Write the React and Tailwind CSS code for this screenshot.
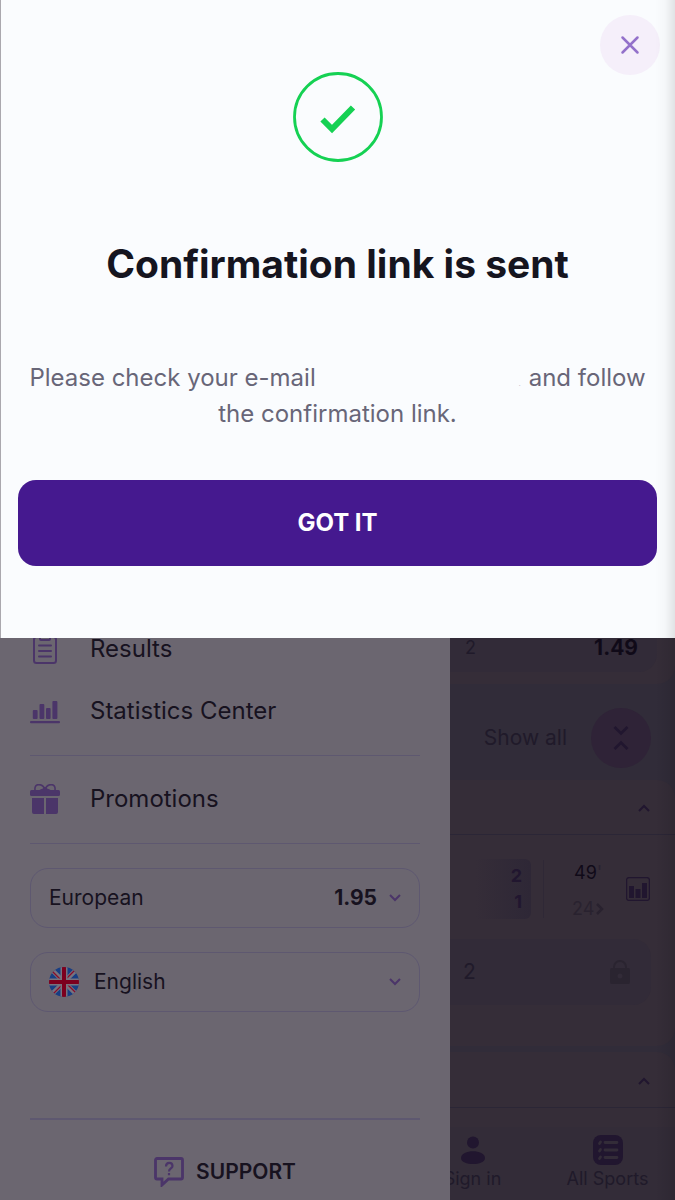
import React, { useState } from 'react';

const ChevronIcon = ({ className, up = false }) => (
  <svg className={className} width="12" height="8" viewBox="0 0 12 8" fill="none" stroke="currentColor" strokeWidth="2" aria-hidden="true">
    <path d={up ? 'M1 7 6 2 11 7' : 'M1 1 6 6 11 1'} />
  </svg>
);

const ResultsIcon = () => (
  <svg width="30" height="30" viewBox="0 0 30 30" fill="none" stroke="currentColor" strokeWidth="2" strokeLinecap="round" aria-hidden="true">
    <rect x="4" y="3" width="22" height="26" rx="2.500" />
    <path d="M10 2v3a1 1 0 0 0 1 1h8a1 1 0 0 0 1-1V2M9 11.500h12M9 17h12M9 22.500h12" />
  </svg>
);

const StatisticsIcon = () => (
  <svg width="30" height="30" viewBox="0 0 30 30" fill="currentColor" aria-hidden="true">
    <rect x="2.800" y="14" width="4.800" height="9" rx="1" />
    <rect x="9.500" y="8" width="4.800" height="15" rx="1" />
    <rect x="16" y="12" width="4.600" height="11" rx="1" />
    <rect x="22.400" y="5" width="5" height="18" rx="1" />
    <rect x="0" y="25" width="30" height="2.200" rx="1" />
  </svg>
);

const GiftIcon = () => (
  <svg width="30" height="30" viewBox="0 0 30 30" fill="currentColor" aria-hidden="true">
    <path d="M15 5C12-1 4-1 5 6M15 5c3-6 11-6 10 1M15 4.500l-5 2M15 4.500l5 2" fill="none" stroke="currentColor" strokeWidth="1.600" />
    <circle cx="15" cy="5" r="2" />
    <rect y="6" width="30" height="6" rx="1.500" />
    <path d="M2 14h12v16H4a2 2 0 0 1-2-2zM16 14h12v14a2 2 0 0 1-2 2H16z" />
  </svg>
);

const SupportIcon = () => (
  <svg width="30" height="30" viewBox="0 0 30 30" fill="none" stroke="currentColor" aria-hidden="true">
    <path d="M3 1.500h24a1.500 1.500 0 0 1 1.500 1.500v17.500a1.500 1.500 0 0 1-1.500 1.500H14.500L8 28v-6H3a1.500 1.500 0 0 1-1.500-1.500V3A1.500 1.500 0 0 1 3 1.500z" strokeWidth="2.800" />
    <path d="M12 9.500c0-5 6.500-4.500 6.500-.5 0 2.500-3.500 2.500-3.500 5.500M15 16v2.200" strokeWidth="2.200" />
  </svg>
);

const FlagIcon = () => (
  <svg className="rounded-full" width="30" height="30" viewBox="0 0 30 30" aria-hidden="true">
    <rect width="30" height="30" fill="#183e83" />
    <path d="M0 0 30 30M30 0 0 30" stroke="#77737f" strokeWidth="4.500" />
    <path d="M0 1 15 16M30 29 15 14M29 0 14 15M1 30l15-15" stroke="#8a0b28" strokeWidth="1.300" />
    <path d="M15 0v30M0 15h30" stroke="#77737f" strokeWidth="7" />
    <path d="M15 0v30M0 15h30" stroke="#7c001e" strokeWidth="4" />
  </svg>
);

const ChartBoxIcon = () => (
  <svg width="24" height="24" viewBox="0 0 24 24" fill="currentColor" aria-hidden="true">
    <rect x=".6" y=".6" width="22.800" height="22.800" rx="2.500" fill="none" stroke="currentColor" strokeWidth="1.300" />
    <path d="M3 9h5v12H3zM9.500 12h5v9h-5zM16 6h5v15h-5z" />
  </svg>
);

const LockIcon = () => (
  <svg width="20" height="24" viewBox="0 0 20 24" aria-hidden="true">
    <path d="M4 9V7a6 6 0 0 1 12 0v2" fill="none" stroke="currentColor" strokeWidth="2" />
    <path fillRule="evenodd" fill="currentColor" d="M2 8h16a2 2 0 0 1 2 2v12a2 2 0 0 1-2 2H2a2 2 0 0 1-2-2V10a2 2 0 0 1 2-2zm8 5.500a2.500 2.500 0 1 0 0 5 2.500 2.500 0 0 0 0-5z" />
  </svg>
);

const UserIcon = () => (
  <svg width="30" height="30" viewBox="0 0 30 30" fill="currentColor" aria-hidden="true">
    <circle cx="15" cy="7.500" r="6" />
    <path d="M3 23c0-9 24-9 24 0 0 8-24 8-24 0z" />
  </svg>
);

const ListIcon = () => (
  <svg width="30" height="30" viewBox="0 0 30 30" aria-hidden="true">
    <rect width="30" height="30" rx="8" fill="currentColor" />
    <path d="M12 7.500h12M12 15h12M12 22.500h12M6.500 8.500l1-1.500M6.500 16l1-1.500M6.500 23.500l1-1.500" stroke="#332c38" strokeWidth="2.800" strokeLinecap="round" />
  </svg>
);

const ConfirmationDialog = () => (
  <section role="dialog" aria-labelledby="dialog-title" className="relative shrink-0 border-l border-[#aaa8ae] bg-[#fafcfe] pt-[72px] pr-[18px] pb-[72px] pl-[17px] text-center">
    <button type="button" aria-label="Close" className="absolute top-[15px] right-[15px] flex h-[60px] w-[60px] items-center justify-center rounded-full bg-[#f5effa] text-[#9371ca]">
      <svg width="20" height="20" viewBox="0 0 20 20" stroke="currentColor" strokeWidth="2.500" strokeLinecap="round" aria-hidden="true">
        <path d="M2.500 2.500l15 15M17.500 2.500l-15 15" />
      </svg>
    </button>
    <svg className="mx-auto" width="90" height="90" viewBox="0 0 90 90" fill="none" stroke="#15d153" aria-hidden="true">
      <circle cx="45" cy="45" r="43.500" strokeWidth="2.800" />
      <path d="M29.500 47.500 39 57 60 35.500" strokeWidth="6" />
    </svg>
    <h1 id="dialog-title" className="mt-[78px] text-[39px] leading-[48px] font-bold text-[#15151f]">
      Confirmation link is sent
    </h1>
    <p className="mt-[72px] text-2xl leading-9 text-[#686678]">
      Please check your e-mail
      <span className="inline-block w-[213px] pr-2 text-right text-[8px] leading-none text-[#c4c2cc]">.</span>
      and follow
      <br />
      the confirmation link.
    </p>
    <button type="button" className="mt-12 block h-[86px] w-full rounded-[18px] bg-[#45198f] text-2xl font-bold text-white">
      GOT IT
    </button>
    <div className="pointer-events-none absolute inset-y-0 right-0 w-5 bg-linear-to-r from-transparent via-black/2 to-black/10" />
  </section>
);

const menuItemClass = 'flex h-[62px] items-center gap-[30px] text-2xl text-[#17121f]';

const Drawer = () => {
  const [odds, setOdds] = useState('European');
  const [language, setLanguage] = useState('English');

  return (
    <aside className="flex w-2/3 shrink-0 flex-col overflow-hidden bg-[#6b6670] px-[30px] text-[#4b3569]">
      <nav>
        {/* first item is partly tucked under the dialog */}
        <a href="#results" className={`${menuItemClass} -mt-5`}>
          <span className="text-[#4b3569]"><ResultsIcon /></span>
          Results
        </a>
        <a href="#statistics" className={menuItemClass}>
          <span className="text-[#4b3569]"><StatisticsIcon /></span>
          Statistics Center
        </a>
        <div className="mt-[13px] border-y border-[#5e5870] pt-3 pb-[13px]">
          <a href="#promotions" className={menuItemClass}>
            <span className="text-[#4b3569]"><GiftIcon /></span>
            Promotions
          </a>
        </div>
      </nav>

      <div className="mt-6 flex h-[60px] items-center rounded-[18px] border border-[#5e5870] px-[18px]">
        <select
          aria-label="Odds format"
          value={odds}
          onChange={(e) => setOdds(e.target.value)}
          className="min-w-0 flex-1 appearance-none text-[21px] text-[#17121f]"
        >
          <option>European</option>
          <option>American</option>
        </select>
        <span className="text-[21px] font-bold text-[#17121f]">1.95</span>
        <ChevronIcon className="ml-3" />
      </div>

      <div className="mt-6 flex h-[60px] items-center gap-[15px] rounded-[18px] border border-[#5e5870] px-[18px]">
        <FlagIcon />
        <select
          aria-label="Language"
          value={language}
          onChange={(e) => setLanguage(e.target.value)}
          className="min-w-0 flex-1 appearance-none text-[21px] text-[#17121f]"
        >
          <option>English</option>
          <option>Deutsch</option>
        </select>
        <ChevronIcon />
      </div>

      <div className="mt-auto flex h-[82px] items-start justify-center border-t-2 border-[#5e5870] pt-[37px]">
        <a href="#support" className="flex items-center gap-3 text-[21px] font-semibold">
          <SupportIcon />
          <span className="leading-[30px] text-[#17121f]">SUPPORT</span>
        </a>
      </div>
    </aside>
  );
};

const Sportsbook = () => (
  <main className="relative flex min-w-0 flex-1 flex-col overflow-hidden bg-[#312c39] text-[#201a2a]">
    <div className="h-[46px] rounded-br-[18px] bg-[#352d38] pr-[18px]">
      <button type="button" className="flex h-[34px] w-full items-start justify-between rounded-br-[18px] bg-[#322b38] pr-[19px] pl-[15px] text-lg leading-5">
        <span>2</span>
        <span className="text-[21px] font-bold text-[#100a18]">1.49</span>
      </button>
    </div>

    <div className="flex h-24 items-center justify-end gap-6 pt-3 pr-6">
      <label htmlFor="show-all" className="text-[21px]">Show all</label>
      <button id="show-all" type="button" className="flex h-[60px] w-[60px] items-center justify-center rounded-full bg-[#2f2337] text-[#21162f]">
        <svg width="16" height="26" viewBox="0 0 16 26" fill="none" stroke="currentColor" strokeWidth="2.600" aria-hidden="true">
          <path d="M1.500 2 8 8.500 14.500 2M1.500 24 8 17.500l6.500 6.500" />
        </svg>
      </button>
    </div>

    <section className="h-[266px] rounded-br-[18px] rounded-tr-[18px] bg-[#352d38]">
      <button type="button" aria-label="Collapse" className="flex h-[55px] w-full items-center justify-end border-b border-[#2b2636] pt-px pr-[25px] text-[#21162f]">
        <ChevronIcon up />
      </button>
      <div className="flex items-center pt-6 pr-[25px] pl-[25px]">
        <div className="flex h-[60px] w-14 flex-col items-end justify-center rounded-r-md bg-linear-to-r from-[#352d38] to-[#2e2736] pr-[9px] text-lg leading-[26px] font-bold text-[#21162f]">
          <span>2</span>
          <span>1</span>
        </div>
        <div className="ml-3 h-[58px] w-px bg-[#2f2836]" />
        <div className="ml-7 flex h-[60px] flex-col text-lg">
          <span className="pl-[2px] leading-7 text-[#100a18]">49<span className="text-[#292230]">'</span></span>
          <a href="#match" className="mt-2 flex items-center leading-7 text-[#29222f]">
            24
            <svg className="ml-px" width="10" height="14" viewBox="0 0 10 14" fill="none" stroke="currentColor" strokeWidth="2.500" aria-hidden="true">
              <path d="M2 2l5 5-5 5" />
            </svg>
          </a>
        </div>
        <div className="ml-auto text-[#21162f]"><ChartBoxIcon /></div>
      </div>
      <div className="pt-5 pr-6">
        <button type="button" className="flex h-[66px] w-full items-center justify-between rounded-r-[18px] bg-[#322b38] pr-[21px] pl-[13px] text-[21px]">
          <span>2</span>
          <span className="text-[#2a2430]"><LockIcon /></span>
        </button>
      </div>
    </section>

    <section className="mt-[6px] flex-1 rounded-tr-[18px] bg-[#352d38]">
      <button type="button" aria-label="Collapse" className="flex h-14 w-full items-center justify-end border-b border-[#2b2636] pt-[3px] pr-[25px] text-[#21162f]">
        <ChevronIcon up />
      </button>
    </section>

    <nav className="flex h-[73px] shrink-0 justify-end bg-[#332c38] pt-2 text-lg leading-7">
      <a href="#signin" className="flex w-[135px] shrink-0 flex-col items-center">
        <span className="h-[30px] text-[#21162f]"><UserIcon /></span>
        Sign in
      </a>
      <a href="#sports" className="flex w-[135px] shrink-0 flex-col items-center">
        <span className="h-[30px] text-[#21162f]"><ListIcon /></span>
        All Sports
      </a>
    </nav>
    <div className="pointer-events-none absolute inset-y-0 right-0 w-5 bg-linear-to-r from-transparent to-black/10" />
  </main>
);

const App = () => (
  <div className="flex min-h-screen flex-col font-['Inter',sans-serif]">
    <ConfirmationDialog />
    <div className="flex flex-1">
      <Drawer />
      <Sportsbook />
    </div>
  </div>
);

export default App;
